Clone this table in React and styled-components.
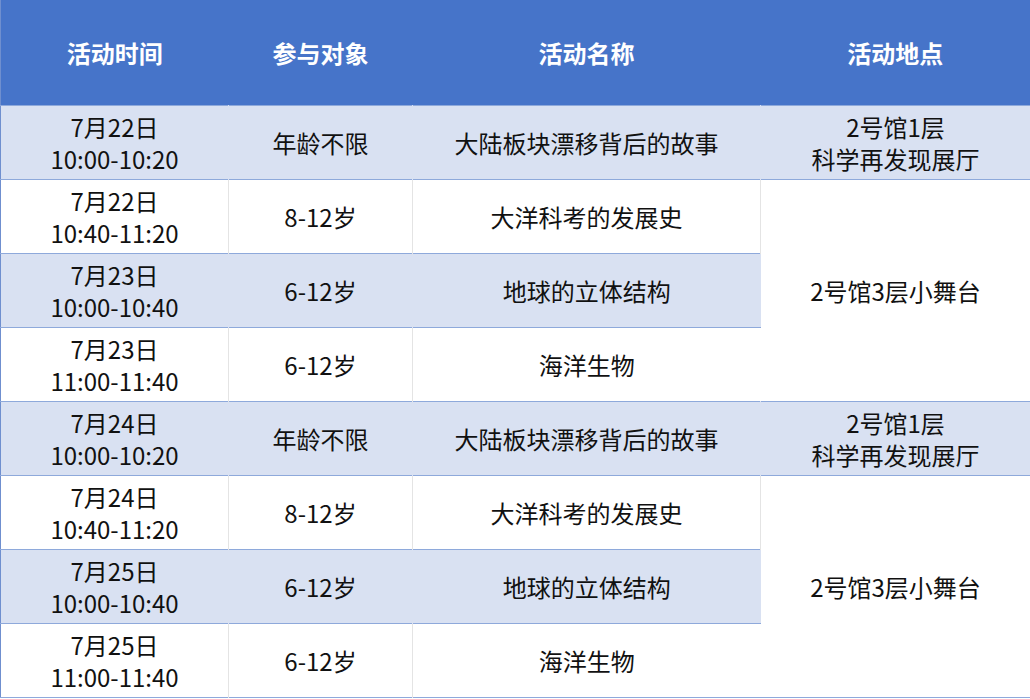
import React from 'react';
import styled, { createGlobalStyle } from 'styled-components';

const GlobalStyle = createGlobalStyle`
  html, body {
    margin: 0;
    padding: 0;
    background: #fff;
  }
`;

const Table = styled.table`
  width: 1030px;
  border-collapse: collapse;
  table-layout: fixed;
  font-family: 'Noto Sans CJK SC', 'Noto Sans', sans-serif;
  color: #111;
  border-left: 1px solid #6f8fcf;
  border-right: 1px solid #4f72b8;
  border-bottom: 1px solid #8ea9db;
`;

const HeadCell = styled.th`
  height: 105px;
  padding: 0;
  background: #4674c9;
  color: #fff;
  font-size: 24px;
  font-weight: 700;
  text-align: center;
  vertical-align: middle;
`;

const Row = styled.tr`
  border-top: 1px solid #8ea9db;
`;

const Cell = styled.td`
  height: 73px;
  padding: 0;
  font-size: 24px;
  line-height: 32px;
  text-align: center;
  vertical-align: middle;
  background: ${(p) => (p.$shaded ? '#d9e1f2' : '#fff')};
  border-right: 1px solid ${(p) => (p.$shaded ? '#d9e1f2' : '#e4e4e4')};
  &:last-child {
    border-right: none;
  }
`;

const rows = [
  { date: '7月22日', time: '10:00-10:20', who: '年龄不限', name: '大陆板块漂移背后的故事', place: ['2号馆1层', '科学再发现展厅'], span: 1, shaded: true },
  { date: '7月22日', time: '10:40-11:20', who: '8-12岁', name: '大洋科考的发展史', place: ['2号馆3层小舞台'], span: 3 },
  { date: '7月23日', time: '10:00-10:40', who: '6-12岁', name: '地球的立体结构', shaded: true },
  { date: '7月23日', time: '11:00-11:40', who: '6-12岁', name: '海洋生物' },
  { date: '7月24日', time: '10:00-10:20', who: '年龄不限', name: '大陆板块漂移背后的故事', place: ['2号馆1层', '科学再发现展厅'], span: 1, shaded: true },
  { date: '7月24日', time: '10:40-11:20', who: '8-12岁', name: '大洋科考的发展史', place: ['2号馆3层小舞台'], span: 3 },
  { date: '7月25日', time: '10:00-10:40', who: '6-12岁', name: '地球的立体结构', shaded: true },
  { date: '7月25日', time: '11:00-11:40', who: '6-12岁', name: '海洋生物' },
];

const App = () => {
  return (
    <>
      <GlobalStyle />
      <Table>
        <colgroup>
          <col style={{ width: 228 }} />
          <col style={{ width: 184 }} />
          <col style={{ width: 348 }} />
          <col style={{ width: 270 }} />
        </colgroup>
        <thead>
          <tr>
            <HeadCell>活动时间</HeadCell>
            <HeadCell>参与对象</HeadCell>
            <HeadCell>活动名称</HeadCell>
            <HeadCell>活动地点</HeadCell>
          </tr>
        </thead>
        <tbody>
          {rows.map((r, i) => (
            <Row key={i}>
              <Cell $shaded={r.shaded}>
                {r.date}
                <br />
                {r.time}
              </Cell>
              <Cell $shaded={r.shaded}>{r.who}</Cell>
              <Cell $shaded={r.shaded}>{r.name}</Cell>
              {r.place && (
                <Cell $shaded={r.shaded} rowSpan={r.span}>
                  {r.place.map((p, j) => (
                    <React.Fragment key={j}>
                      {j > 0 && <br />}
                      {p}
                    </React.Fragment>
                  ))}
                </Cell>
              )}
            </Row>
          ))}
        </tbody>
      </Table>
    </>
  );
};

export default App;
